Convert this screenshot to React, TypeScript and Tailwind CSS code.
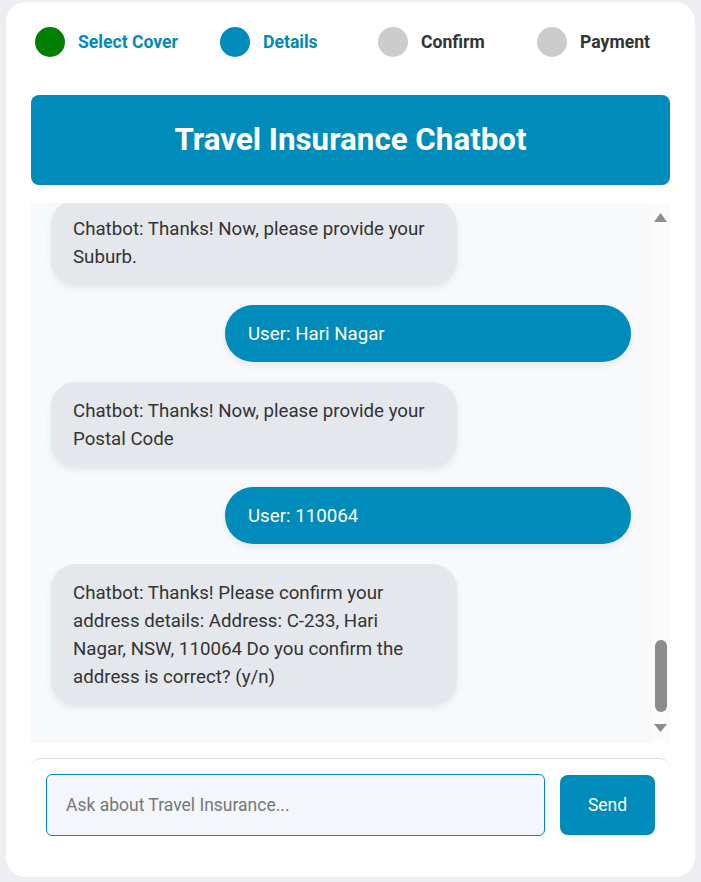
import React, { useLayoutEffect, useRef, useState } from "react";

type Msg = { from: "bot" | "user"; text: string };

const messages: Msg[] = [
  { from: "bot", text: "Chatbot: Hello! Welcome to Travel Insurance. How can I help you today?" },
  { from: "user", text: "User: I want to buy travel insurance" },
  { from: "bot", text: "Chatbot: Great! Where are you travelling to?" },
  { from: "user", text: "User: Japan" },
  { from: "bot", text: "Chatbot: Thanks! Please provide your departure date (DD/MM/YYYY)" },
  { from: "user", text: "User: 15/08/2024" },
  { from: "bot", text: "Chatbot: Thanks! Please provide your return date (DD/MM/YYYY)" },
  { from: "user", text: "User: 30/08/2024" },
  { from: "bot", text: "Chatbot: How many travellers will be covered under this policy?" },
  { from: "user", text: "User: 2" },
  { from: "bot", text: "Chatbot: Does anyone travelling have a pre-existing medical condition? (y/n)" },
  { from: "user", text: "User: n" },
  { from: "bot", text: "Chatbot: Would you like to add cruise cover to your policy? (y/n)" },
  { from: "user", text: "User: n" },
  { from: "bot", text: "Chatbot: Would you like to add cover for snow sports? (y/n)" },
  { from: "user", text: "User: n" },
  { from: "bot", text: "Chatbot: Would you like to add rental car excess cover? (y/n)" },
  { from: "user", text: "User: y" },
  { from: "bot", text: "Chatbot: Please select the excess amount you would like ($0, $100 or $250)" },
  { from: "user", text: "User: $100" },
  { from: "bot", text: "Chatbot: Great! You have selected Comprehensive cover. Let's get your details." },
  { from: "user", text: "User: ok" },
  { from: "bot", text: "Chatbot: Please provide your First Name" },
  { from: "user", text: "User: Hari" },
  { from: "bot", text: "Chatbot: Thanks! Now, please provide your Last Name" },
  { from: "user", text: "User: Kumar" },
  { from: "bot", text: "Chatbot: Thanks! Now, please provide your Date of Birth (DD/MM/YYYY)" },
  { from: "user", text: "User: 12/05/1990" },
  { from: "bot", text: "Chatbot: Thanks! Now, please provide your Email Address" },
  { from: "user", text: "User: hari.kumar@example.com" },
  { from: "bot", text: "Chatbot: Thanks! Now, please provide your Phone Number" },
  { from: "user", text: "User: 0412345678" },
  { from: "bot", text: "Chatbot: Thanks! Now, please provide your State" },
  { from: "user", text: "User: NSW" },
  { from: "bot", text: "Chatbot: Thanks! Now, please provide your Address" },
  { from: "user", text: "User: C-233" },
  { from: "bot", text: "Chatbot: Thanks! Now, please provide your Suburb." },
  { from: "user", text: "User: Hari Nagar" },
  { from: "bot", text: "Chatbot: Thanks! Now, please provide your Postal Code" },
  { from: "user", text: "User: 110064" },
  {
    from: "bot",
    text: "Chatbot: Thanks! Please confirm your address details: Address: C-233, Hari Nagar, NSW, 110064 Do you confirm the address is correct? (y/n)",
  },
];

const steps = [
  { label: "Select Cover", circle: "bg-[#008000]", text: "text-[#008cba]", col: "w-[185px]" },
  { label: "Details", circle: "bg-[#008cba]", text: "text-[#008cba]", col: "w-[158px]" },
  { label: "Confirm", circle: "bg-[#cccccc]", text: "text-[#333333]", col: "w-[159px]" },
  { label: "Payment", circle: "bg-[#cccccc]", text: "text-[#333333]", col: "flex-1" },
];

export default function App() {
  const ref = useRef<HTMLDivElement>(null);
  const [thumb, setThumb] = useState(71);
  useLayoutEffect(() => {
    const el = ref.current;
    if (el) {
      el.scrollTop = el.scrollHeight;
      const h = Math.max(24, Math.round((510 * el.clientHeight) / el.scrollHeight));
      setThumb(h);
    }
  }, []);

  return (
    <div className="min-h-[882px] bg-[#eceef1] pt-[2px] px-[6px] pb-[5px] font-['Roboto','Liberation_Sans',sans-serif]">
      <div className="bg-white rounded-[20px] h-[875px] p-[25px] flex flex-col">
        {/* stepper */}
        <div className="flex pl-[4px] h-[30px]">
          {steps.map((s) => (
            <div key={s.label} className={`${s.col} flex items-center gap-[13px]`}>
              <div className={`w-[30px] h-[30px] shrink-0 rounded-full ${s.circle}`} />
              <span className={`text-[17.6px] leading-[30px] font-bold whitespace-nowrap ${s.text}`}>{s.label}</span>
            </div>
          ))}
        </div>

        {/* header */}
        <div className="mt-[38px] h-[90px] shrink-0 rounded-[8px] bg-[#008cba] flex items-center justify-center">
          <h1 className="text-white text-[31.3px] leading-[40px] font-bold">Travel Insurance Chatbot</h1>
        </div>

        {/* chat */}
        <div className="mt-[18px] h-[540px] shrink-0 flex bg-[#f8f9fb]">
          <div
            ref={ref}
            className="flex-1 min-w-0 overflow-y-auto [scrollbar-width:none] pt-[20px] px-[20px] pb-[18px] flex flex-col"
          >
            {messages.map((m, i) =>
              m.from === "bot" ? (
                <div
                  key={i}
                  className="self-start w-[70%] mb-[20px] shrink-0 bg-[#e4e7ec] text-[#333333] text-[18.7px] leading-[28px] rounded-[25px] px-[22px] py-[14.5px] shadow-[0_3px_7px_rgba(0,0,0,0.08)]"
                >
                  {m.text}
                </div>
              ) : (
                <div
                  key={i}
                  className="self-end w-[70%] mb-[20px] shrink-0 bg-[#008cba] text-white text-[18.7px] leading-[28px] rounded-[28px] px-[23px] py-[14.5px] shadow-[0_3px_7px_rgba(0,0,0,0.08)]"
                >
                  {m.text}
                </div>
              )
            )}
          </div>
          {/* scrollbar */}
          <div className="w-[19px] shrink-0 bg-[#fbfbfc] flex flex-col items-center">
            <svg width="13" height="9" viewBox="0 0 13 9" className="mt-[10px] shrink-0">
              <polygon points="6.5,0 13,9 0,9" fill="#8c8c8c" />
            </svg>
            <div className="flex-1 flex flex-col justify-end">
              <div className="w-[12px] rounded-full bg-[#8c8c8c]" style={{ height: thumb }} />
            </div>
            <svg width="13" height="8" viewBox="0 0 13 8" className="mt-[12px] mb-[11px] shrink-0">
              <polygon points="0,0 13,0 6.5,8" fill="#8c8c8c" />
            </svg>
          </div>
        </div>

        {/* input */}
        <div className="mt-[15px] border-t border-[#dddddd] rounded-t-[10px] p-[15px] flex gap-[15px] items-center">
          <input
            className="flex-1 min-w-0 h-[62px] rounded-[6px] border border-[#008cba] bg-[#f3f6fa] px-[19px] text-[17.5px] text-[#333] placeholder:text-[#777777] outline-none"
            placeholder="Ask about Travel Insurance..."
          />
          <button className="w-[95px] h-[60px] rounded-[8px] bg-[#008cba] text-white text-[17.5px] font-normal">
            Send
          </button>
        </div>
      </div>
    </div>
  );
}
